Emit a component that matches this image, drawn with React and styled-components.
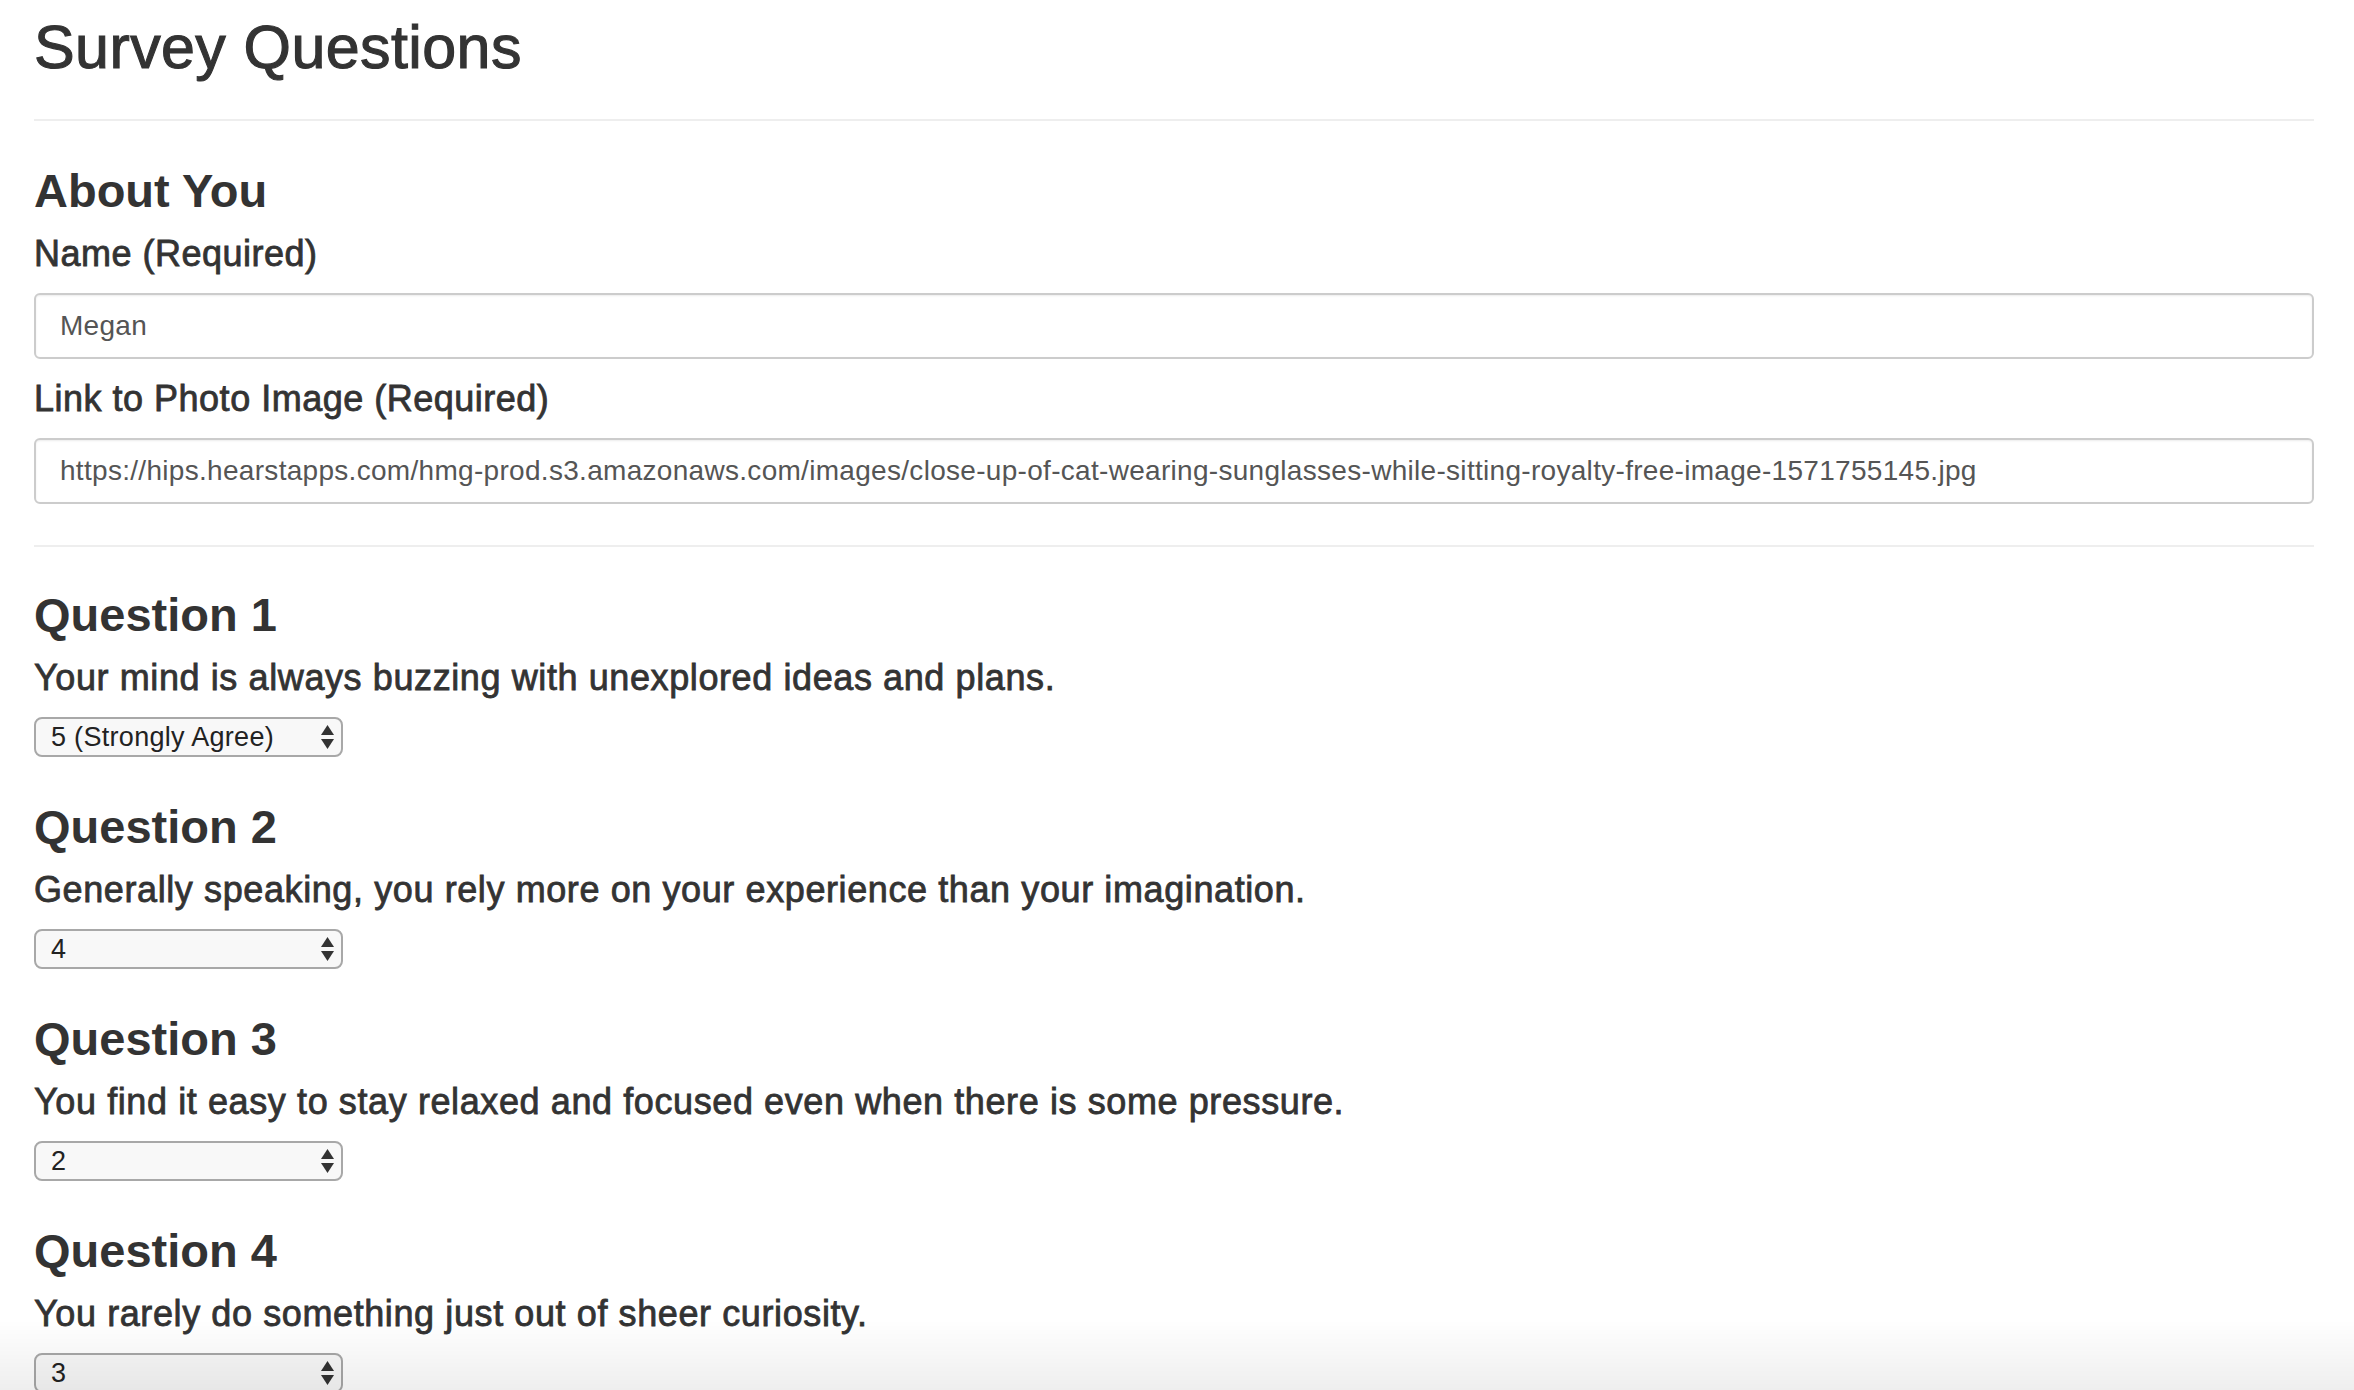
import React from 'react';
import styled, { createGlobalStyle } from 'styled-components';

const GlobalStyle = createGlobalStyle`
    body {
        margin: 0;
        background: #fff;
        color: #333;
        font-family: "Liberation Sans", Arial, sans-serif;
    }
    * {
        box-sizing: border-box;
    }
`;

const Page = styled.div`
    padding: 14px 40px 80px 34px;
`;

// the reference uses a medium weight, faked here with a thin stroke
const Title = styled.h1`
    margin: 0;
    font-size: 61px;
    line-height: 66px;
    font-weight: 400;
    letter-spacing: 0.4px;
    -webkit-text-stroke: 1.1px #333;
`;

const Divider = styled.hr`
    border: 0;
    height: 2px;
    background: #eee;
    margin: ${props => props.top}px 0 0;
`;

const Section = styled.section`
    display: flex;
    flex-direction: column;
`;

const SectionHeading = styled.h2`
    margin: ${props => props.top || 44}px 0 0;
    font-size: 47px;
    line-height: 52px;
    font-weight: 700;
`;

const FieldLabel = styled.label`
    display: block;
    margin-top: ${props => props.$first ? 17 : 20}px;
    font-size: 36px;
    line-height: 40px;
    font-weight: 400;
    letter-spacing: 0.5px;
    -webkit-text-stroke: 0.8px #333;
`;

const TextInput = styled.input`
    display: block;
    width: 100%;
    height: 66px;
    margin-top: 19px;
    padding: 0 24px;
    border: 2px solid #ccc;
    border-radius: 6px;
    box-shadow: inset 0 1px 2px rgba(0, 0, 0, 0.075);
    font-family: inherit;
    font-size: 28px;
    letter-spacing: 0.3px;
    color: #555;
    background: #fff;
    outline: none;
`;

const QuestionText = styled.p`
    margin: 17px 0 0;
    font-size: 36px;
    line-height: 40px;
    font-weight: 400;
    letter-spacing: 0.6px;
    -webkit-text-stroke: 0.8px #333;
`;

const SelectWrap = styled.div`
    position: relative;
    width: 309px;
    margin-top: 19px;
`;

const Select = styled.select`
    appearance: none;
    -webkit-appearance: none;
    display: block;
    width: 100%;
    height: 40px;
    padding: 0 40px 0 15px;
    border: 2px solid #a8a8a8;
    border-radius: 8px;
    background: #f8f8f8;
    font-family: inherit;
    font-size: 27px;
    letter-spacing: 0.3px;
    color: #222;
    outline: none;
`;

const Arrows = styled.svg`
    position: absolute;
    right: 9px;
    top: 8px;
    pointer-events: none;
`;

const BottomFade = styled.div`
    position: fixed;
    left: 0;
    right: 0;
    bottom: 0;
    height: 70px;
    pointer-events: none;
    background: linear-gradient(to bottom, rgba(0, 0, 0, 0), rgba(0, 0, 0, 0.065));
`;

const options = ['1 (Strongly Disagree)', '2', '3', '4', '5 (Strongly Agree)'];

const questions = [
    { id: 1, text: 'Your mind is always buzzing with unexplored ideas and plans.', answer: '5' },
    { id: 2, text: 'Generally speaking, you rely more on your experience than your imagination.', answer: '4' },
    { id: 3, text: 'You find it easy to stay relaxed and focused even when there is some pressure.', answer: '2' },
    { id: 4, text: 'You rarely do something just out of sheer curiosity.', answer: '3' },
];

function ScaleSelect({ value }) {
    return (
        <SelectWrap>
            <Select defaultValue={value}>
                {options.map((o, i) => (
                    <option key={o} value={String(i + 1)}>{o}</option>
                ))}
            </Select>
            <Arrows width="13" height="24" viewBox="0 0 13 24">
                <path d="M6.5 0 L13 10 L0 10 Z" fill="#333" />
                <path d="M0 14 L13 14 L6.5 24 Z" fill="#333" />
            </Arrows>
        </SelectWrap>
    );
}

export default function App() {
    return (
        <>
            <GlobalStyle />
            <Page>
                <Title>Survey Questions</Title>
                <Divider top={39} />

                <Section>
                    <SectionHeading>About You</SectionHeading>
                    <FieldLabel $first htmlFor="name">Name (Required)</FieldLabel>
                    <TextInput id="name" type="text" defaultValue="Megan" />
                    <FieldLabel htmlFor="photo">Link to Photo Image (Required)</FieldLabel>
                    <TextInput
                        id="photo"
                        type="text"
                        defaultValue="https://hips.hearstapps.com/hmg-prod.s3.amazonaws.com/images/close-up-of-cat-wearing-sunglasses-while-sitting-royalty-free-image-1571755145.jpg"
                    />
                </Section>

                <Divider top={41} />

                {questions.map((q, i) => (
                    <Section key={q.id}>
                        <SectionHeading top={i === 0 ? 42 : 44}>Question {q.id}</SectionHeading>
                        <QuestionText>{q.text}</QuestionText>
                        <ScaleSelect value={q.answer} />
                    </Section>
                ))}
            </Page>
            <BottomFade />
        </>
    );
}
